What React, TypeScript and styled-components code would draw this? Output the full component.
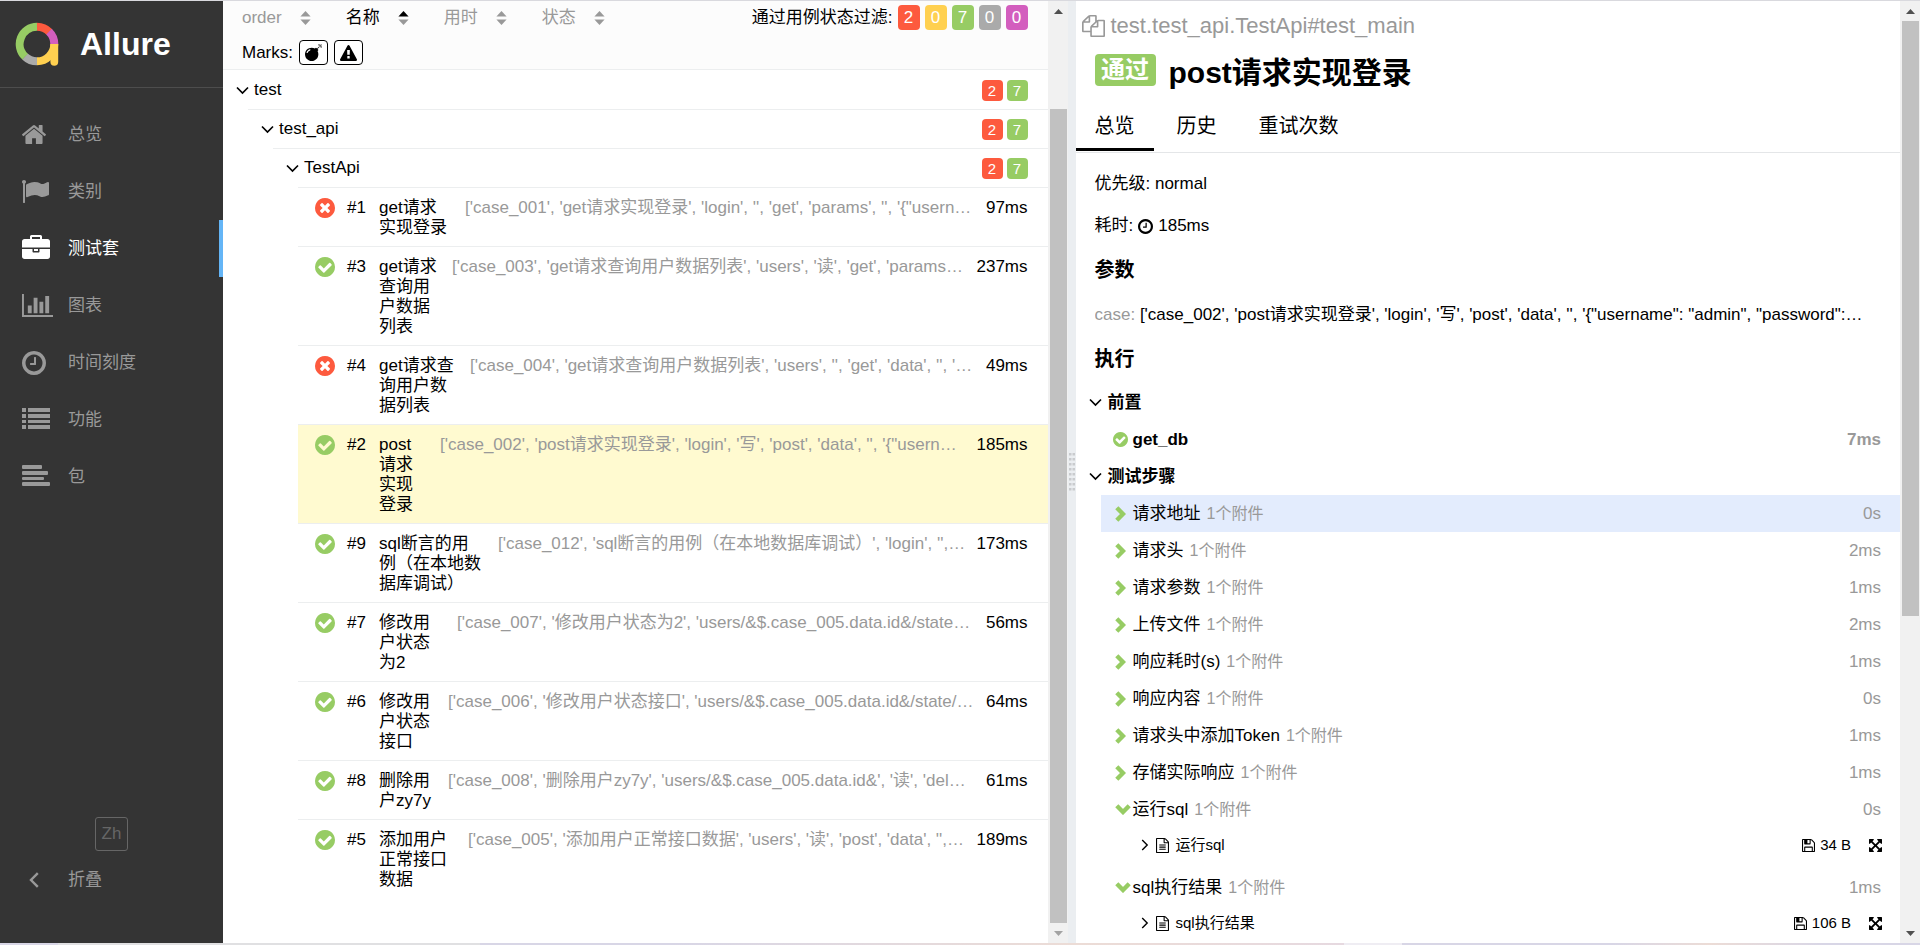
import React from "react";
import styled, { createGlobalStyle, css } from "styled-components";

const GlobalStyle = createGlobalStyle`
  *, *::before, *::after { box-sizing: border-box; }
  body {
    margin: 0;
    font: 17px/20px "Liberation Sans", "Noto Sans CJK SC", sans-serif;
    color: #000;
    background: #fff;
  }
  button {
    font: inherit;
    color: inherit;
    background: none;
    border: 0;
    padding: 0;
    cursor: pointer;
  }
  ul { list-style: none; margin: 0; padding: 0; }
  h1, h2, h3, p { margin: 0; }
  a { color: inherit; text-decoration: none; }
  svg { display: block; flex: none; }
`;

const color = {
  failed: "#fd5a3e",
  broken: "#ffd050",
  passed: "#97cc64",
  skipped: "#aaa",
  unknown: "#d35ebe",
  muted: "#999",
  line: "#eceeef",
};
type Status = "failed" | "broken" | "passed" | "skipped" | "unknown";

/* ---------- icons ---------- */

const DISC =
  "q0 209-103 385.5t-279.5 279.5-385.5 103-385.5-103-279.5-279.5-103-385.5 103-385.5 279.5-279.5 385.5-103 385.5 103 279.5 279.5 103 385.5z";

const icons = {
  home: {
    box: "89 253 1614 1283",
    d: "M1472 992v480q0 26-19 45t-45 19h-384v-384h-256v384h-384q-26 0-45-19t-19-45v-480q0-1 .5-3t.5-3l575-474 575 474q1 2 1 6zm223-69l-62 74q-8 9-21 11h-3q-13 0-21-7l-692-577-692 577q-12 8-24 7-13-2-21-11l-62-74q-8-10-7-23.5t11-21.5l719-599q32-26 76-26t76 26l244 204v-195q0-14 9-23t23-9h192q14 0 23 9t9 23v408l219 182q10 8 11 21.5t-7 23.5z",
  },
  flag: {
    box: "64 128 1728 1536",
    d: "M320 256q0 72-64 110v1266q0 13-9.5 22.5t-22.5 9.5h-64q-13 0-22.5-9.5t-9.5-22.5v-1266q-64-38-64-110 0-53 37.5-90.5t90.5-37.5 90.5 37.5 37.5 90.5zm1472 64v763q0 25-12.5 38.5t-39.5 27.5q-215 116-369 116-61 0-123.5-22t-108.5-48-115.5-48-142.5-22q-192 0-464 146-17 9-33 9-26 0-45-19t-19-45v-742q0-32 31-55 21-14 79-43 236-120 421-120 107 0 200 29t219 88q38 19 88 19 54 0 117.5-21t110-47 88-47 54.5-21q26 0 45 19t19 45z",
  },
  briefcase: {
    box: "0 0 1792 1792",
    d: "M640 256h512v-128h-512v128zm1152 640v480q0 66-47 113t-113 47h-1472q-66 0-113-47t-47-113v-480h672v160q0 26 19 45t45 19h320q26 0 45-19t19-45v-160h672zm-768 0v128h-256v-128h256zm768-480v384h-1792v-384q0-66 47-113t113-47h352v-160q0-40 28-68t68-28h576q40 0 68 28t28 68v160h352q66 0 113 47t47 113z",
  },
  chart: {
    box: "0 128 2048 1536",
    d: "M640 896v512h-256v-512h256zm384-512v1024h-256v-1024h256zm1024 1152v128h-2048v-1536h128v1408h1920zm-640-896v768h-256v-768h256zm384-384v1152h-256v-1152h256z",
  },
  clock: {
    box: "128 128 1536 1536",
    d:
      "M1024 544v448q0 14-9 23t-23 9h-320q-14 0-23-9t-9-23v-64q0-14 9-23t23-9h224v-352q0-14 9-23t23-9h64q14 0 23 9t9 23zm416 352q0-148-73-273t-198-198-273-73-273 73-198 198-73 273 73 273 198 198 273 73 273-73 198-198 73-273zm224 0" +
      DISC,
  },
  list: {
    box: "0 0 28 24",
    d: "M0 0h4v4H0zM6 0h22v4H6zM0 6h4v4H0zM6 6h22v4H6zM0 12h4v3H0zM6 12h22v3H6zM0 17h4v4H0zM6 17h22v4H6z",
  },
  align: {
    box: "0 0 28 24",
    d: "M1 0h18q1 0 1 1v2q0 1-1 1H1q-1 0-1-1V1q0-1 1-1zM1 6h24q1 0 1 1v2q0 1-1 1H1q-1 0-1-1V7q0-1 1-1zM1 12h20q1 0 1 1v1q0 1-1 1H1q-1 0-1-1v-1q0-1 1-1zM1 17h26q1 0 1 1v2q0 1-1 1H1q-1 0-1-1v-2q0-1 1-1z",
  },
  passed: {
    box: "128 128 1536 1536",
    d:
      "M1412 734q0-28-18-46l-91-90q-19-19-45-19t-45 19l-408 407-226-226q-19-19-45-19t-45 19l-91 90q-18 18-18 46 0 27 18 45l362 362q19 19 45 19 27 0 46-19l543-543q18-18 18-45zm252 162" +
      DISC,
  },
  failed: {
    box: "128 128 1536 1536",
    d:
      "M1277 1122q0-26-19-45l-181-181 181-181q19-19 19-45 0-27-19-46l-90-90q-19-18-46-18-26 0-45 18l-181 181-181-181q-19-18-45-18-27 0-46 18l-90 90q-19 19-19 46 0 26 19 45l181 181-181 181q-19 19-19 45 0 27 19 46l90 90q19 18 46 18 26 0 45-18l181-181 181 181q19 18 45 18 27 0 46-18l90-90q19-19 19-46zm387-226" +
      DISC,
  },
  bomb: {
    box: "0 0 1792 1792",
    d: "M571 589q-10-25-34-35t-49 0q-108 44-191 127t-127 191q-10 25 0 49t35 34q13 5 24 5 42 0 60-40 34-84 98.5-148.5t148.5-98.5q25-11 35-35t0-49zm942-356l46 46-244 243 68 68q19 19 19 45.5t-19 45.5l-64 64q89 161 89 343 0 143-55.5 273.5t-150 225-225 150-273.5 55.5-273.5-55.5-225-150-150-225-55.5-273.5 55.5-273.5 150-225 225-150 273.5-55.5q182 0 343 89l64-64q19-19 45.5-19t45.5 19l68 68zm8-56q-10 10-22 10-13 0-23-10l-91-90q-9-10-9-23t9-23q10-9 23-9t23 9l90 91q10 9 10 22.5t-10 22.5zm230 230q-11 9-23 9t-23-9l-90-91q-10-9-10-22.5t10-22.5q9-10 22.5-10t22.5 10l91 90q9 10 9 23t-9 23zm41-183q0 14-9 23t-23 9h-96q-14 0-23-9t-9-23 9-23 23-9h96q14 0 23 9t9 23zm-192-192v96q0 14-9 23t-23 9-23-9-9-23v-96q0-14 9-23t23-9 23 9 9 23zm151 55l-91 90q-10 10-22 10-13 0-23-10-10-9-10-22.5t10-22.5l90-91q10-9 23-9t23 9q9 10 9 23t-9 23z",
  },
  warning: {
    box: "0 0 1792 1664",
    d: "M1024 1375v-190q0-14-9.5-23.5t-22.5-9.5h-192q-13 0-22.5 9.5t-9.5 23.5v190q0 14 9.5 23.5t22.5 9.5h192q13 0 22.5-9.5t9.5-23.5zm-2-374l18-459q0-12-10-19-13-11-24-11h-220q-11 0-24 11-10 7-10 21l17 457q0 10 10 16.5t24 6.5h185q14 0 23.5-6.5t10.5-16.5zm-14-934l768 1408q35 63-2 126-17 29-46.5 46t-63.5 17h-1536q-34 0-63.5-17t-46.5-46q-37-63-2-126l768-1408q17-31 47-49t65-18 65 18 47 49z",
  },
  copy: {
    box: "0 0 1792 1792",
    d: "M1696 384q40 0 68 28t28 68v1216q0 40-28 68t-68 28h-960q-40 0-68-28t-28-68v-288h-544q-40 0-68-28t-28-68v-672q0-40 20-88t48-76l408-408q28-28 76-48t88-20h416q40 0 68 28t28 68v328q68-40 128-40h416zm-544 213l-299 299h299v-299zm-640-384l-299 299h299v-299zm196 647l316-316v-416h-384v416q0 40-28 68t-68 28h-416v640h512v-256q0-40 20-88t48-76zm956 804v-1152h-384v416q0 40-28 68t-68 28h-416v640h896z",
  },
  file: {
    box: "128 0 1536 1792",
    d: "M1596 380q28 28 48 76t20 88v1152q0 40-28 68t-68 28h-1344q-40 0-68-28t-28-68v-1600q0-40 28-68t68-28h896q40 0 88 20t76 48zm-444-244v376h376q-10-29-22-41l-313-313q-12-12-41-22zm384 1528v-1024h-416q-40 0-68-28t-28-68v-416h-768v1536h1280zm-1024-864q0-14 9-23t23-9h704q14 0 23 9t9 23v64q0 14-9 23t-23 9h-704q-14 0-23-9t-9-23v-64zm736 224q14 0 23 9t9 23v64q0 14-9 23t-23 9h-704q-14 0-23-9t-9-23v-64q0-14 9-23t23-9h704zm0 256q14 0 23 9t9 23v64q0 14-9 23t-23 9h-704q-14 0-23-9t-9-23v-64q0-14 9-23t23-9h704z",
  },
  save: {
    box: "128 128 1536 1536",
    d: "M512 1536h768v-384h-768v384zm896 0h128v-896q0-14-10-38.5t-20-34.5l-281-281q-10-10-34-20t-39-10v416q0 40-28 68t-68 28h-576q-40 0-68-28t-28-68v-416h-128v1280h128v-416q0-40 28-68t68-28h832q40 0 68 28t28 68v416zm-384-928v-320q0-13-9.5-22.5t-22.5-9.5h-192q-13 0-22.5 9.5t-9.5 22.5v320q0 13 9.5 22.5t22.5 9.5h192q13 0 22.5-9.5t9.5-22.5zm640 32v928q0 40-28 68t-68 28h-1344q-40 0-68-28t-28-68v-1344q0-40 28-68t68-28h928q40 0 88 20t76 48l280 280q28 28 48 76t20 88z",
  },
  expand: {
    box: "128 128 1536 1536",
    d: "M1411 541l-355 355 355 355 144-144q29-31 70-14 39 17 39 59v448q0 26-19 45t-45 19h-448q-42 0-59-40-17-39 14-69l144-144-355-355-355 355 144 144q31 30 14 69-17 40-59 40h-448q-26 0-45-19t-19-45v-448q0-42 40-59 39-17 69 14l144 144 355-355-355-355-144 144q-19 19-45 19-12 0-24-5-40-17-40-59v-448q0-26 19-45t45-19h448q42 0 59 40 17 39-14 69l-144 144 355 355 355-355-144-144q-31-30-14-69 17-40 59-40h448q26 0 45 19t19 45v448q0 42-39 59-13 5-25 5-26 0-45-19z",
  },
};
type IconName = keyof typeof icons;

const Icon = ({ name, w, h = w, fill = "currentColor" }: { name: IconName; w: number; h?: number; fill?: string }) => (
  <svg width={w} height={h} viewBox={icons[name].box} fill={fill} preserveAspectRatio="none" aria-hidden="true">
    <path d={icons[name].d} />
  </svg>
);

const arrows = {
  down: { w: 13, h: 9, pts: "1,1.5 6.5,7 12,1.5", sw: 1.7, c: "#000" },
  right: { w: 8, h: 12, pts: "1.2,1 6.2,6 1.2,11", sw: 1.4, c: "#000" },
  left: { w: 10, h: 16, pts: "8.8,1.2 2,8 8.8,14.8", sw: 2.4, c: "#999" },
  stepRight: { w: 11, h: 16, pts: "1.8,1.8 8,8 1.8,14.2", sw: 4.4, c: color.passed },
  stepDown: { w: 16, h: 11, pts: "1.8,1.8 8,8 14.2,1.8", sw: 4.4, c: color.passed },
};
const Arrow = ({ kind }: { kind: keyof typeof arrows }) => {
  const a = arrows[kind];
  return (
    <svg width={a.w} height={a.h} viewBox={`0 0 ${a.w} ${a.h}`} fill="none" aria-hidden="true">
      <polyline points={a.pts} stroke={a.c} strokeWidth={a.sw} />
    </svg>
  );
};

const SortArrows = ({ up }: { up?: boolean }) => (
  <svg width="11" height="14" viewBox="0 0 11 14" aria-hidden="true">
    <path d="M5.5 0L10.6 5.6H.4z" fill={up ? "#000" : "#999"} />
    <path d="M5.5 14L.4 8.4h10.2z" fill="#999" />
  </svg>
);

const Logo = () => (
  <svg width="44" height="44" viewBox="0 0 44 44" fill="none" strokeWidth="8" aria-hidden="true">
    <path d="M22 4.8A17.2 17.2 0 0 1 34.4 10.1" stroke={color.failed} />
    <path d="M34 9.7A17.4 17.4 0 0 1 39.3 22" stroke={color.unknown} />
    <path d="M39.3 22A17.4 17.4 0 0 1 22 39.3" stroke={color.broken} />
    <path d="M35.4 22h7.8v17.8a3.9 3.9 0 0 1-7.8 0z" fill={color.broken} />
    <path d="M22 39.3A17.4 17.4 0 0 1 9.9 34.5" stroke={color.skipped} />
    <path d="M10.1 34.7A17.4 17.4 0 0 1 22 4.7" stroke={color.passed} />
  </svg>
);

/* ---------- frame ---------- */

const Page = styled.div`
  display: flex;
  flex-direction: column;
  height: 100vh;
  overflow: hidden;
  border-top: 1px solid #d9d9de;
`;
const Columns = styled.div`
  display: flex;
  flex: 1;
  min-height: 0;
`;
const BottomEdge = styled.div`
  flex: none;
  height: 2px;
  background: linear-gradient(
    to right,
    #d8d6e6 0 3%, #e0e0e2 3% 25%, #d8d6e6 25% 35%, #ecdcd6 56%, #e6d9e0 70%,
    #efedf3 70% 73%, #d8d6e6 73% 84%, #ecdcd6 89%, #d8d6e6 95%
  );
`;

/* ---------- side navigation ---------- */

const Side = styled.aside`
  display: flex;
  flex-direction: column;
  flex: none;
  width: 223px;
  background: #343434;
  color: #999;
`;
const Brand = styled.a`
  display: flex;
  align-items: center;
  gap: 21px;
  height: 87px;
  padding-left: 15px;
  border-bottom: 1px solid #4d4d4d;
  color: #fff;
  font-size: 32px;
  font-weight: bold;
`;
const NavList = styled.ul`
  flex: 1;
  padding-top: 18px;
`;
const navRow = css`
  display: flex;
  align-items: center;
  width: 100%;
  height: 57px;
`;
const NavLink = styled.a<{ $active?: boolean }>`
  ${navRow}
  padding-left: 22px;
  border-right: 4px solid ${(p) => (p.$active ? "#64b5f6" : "transparent")};
  color: ${(p) => (p.$active ? "#fff" : "#999")};
`;
const NavIcon = styled.span`
  width: 46px;
`;
const LangButton = styled.button`
  align-self: center;
  width: 33px;
  height: 34px;
  border: 1px solid #666;
  border-radius: 3px;
  color: #666;
`;
const CollapseButton = styled.button`
  ${navRow}
  margin-bottom: 35px;
  padding-left: 29px;
`;
const CollapseIcon = styled.span`
  width: 39px;
`;

/* ---------- scroll bars and splitter ---------- */

const Bar = styled.div`
  display: flex;
  flex-direction: column;
  flex: none;
  width: 20px;
  padding: 0 1px 0 2px;
  background: #f1f1f1;
`;
const BarEnd = styled.span`
  display: flex;
  align-items: center;
  justify-content: center;
  height: 20px;
`;
const BarGap = styled.span<{ $grow: number }>`
  flex: ${(p) => p.$grow} 0 0;
`;
const BarThumb = styled(BarGap)`
  background: #c1c1c1;
`;
const ScrollBar = ({ before, size, after, dim }: { before: number; size: number; after: number; dim?: boolean }) => (
  <Bar aria-hidden="true">
    <BarEnd>
      <svg width="9" height="5"><path d="M4.500 0L9 5H0z" fill="#505050" /></svg>
    </BarEnd>
    <BarGap $grow={before} />
    <BarThumb $grow={size} />
    <BarGap $grow={after} />
    <BarEnd>
      <svg width="9" height="5"><path d="M0 0h9L4.500 5z" fill={dim ? "#a3a3a3" : "#505050"} /></svg>
    </BarEnd>
  </Bar>
);
const Gutter = styled.div`
  display: flex;
  align-items: center;
  justify-content: center;
  flex: none;
  width: 8px;
  background: #ebeef1;
`;
const Grip = () => (
  <svg width="6" height="38" fill="#c9cbce" aria-hidden="true">
    {Array.from({ length: 8 }, (_, i) => (
      <path key={i} d={`M0 ${i * 5}h2.500v2.500H0zM3.500 ${i * 5}H6v2.500H3.500z`} />
    ))}
  </svg>
);

/* ---------- tree pane ---------- */

const Pane = styled.section`
  display: flex;
  flex: 1 1 0;
  min-width: 0;
`;
const PaneBody = styled.div`
  flex: 1;
  min-width: 0;
  overflow: hidden;
`;
const TreeHead = styled.header`
  height: 69px;
  padding: 4px 20px 0 19px;
  background: #fcfcfc;
  border-bottom: 1px solid ${color.line};
`;
const HeadRow = styled.div`
  display: flex;
  align-items: center;
  height: 25px;
  margin-bottom: 10px;
`;
const Sorter = styled.button<{ $active?: boolean }>`
  display: flex;
  align-items: center;
  gap: 18px;
  margin-right: 35px;
  color: ${(p) => (p.$active ? "#000" : "#999")};
`;
const Filters = styled.div`
  display: flex;
  align-items: center;
  gap: 5px;
  margin-left: auto;
`;
const FilterBadge = styled.button<{ $status: Status }>`
  width: 22px;
  height: 25px;
  border-radius: 4px;
  background: ${(p) => color[p.$status]};
  color: #fff;
`;
const MarkButton = styled.button`
  display: flex;
  align-items: center;
  justify-content: center;
  width: 29px;
  height: 25px;
  margin-left: 6px;
  border: 1px solid #000;
  border-radius: 4px;
  background: #fff;
`;
const Tree = styled.ul`
  padding-top: 1px;
`;
const Branch = styled.ul`
  margin-left: 25px;
  & > li { border-top: 1px solid ${color.line}; }
`;
const GroupRow = styled.button`
  display: flex;
  align-items: center;
  gap: 5px;
  width: 100%;
  height: 38px;
  padding: 0 20px 0 13px;
`;
const Counts = styled.span`
  display: flex;
  gap: 4px;
  margin-left: auto;
`;
const Count = styled.span<{ $status: Status }>`
  width: 21px;
  border-radius: 4px;
  background: ${(p) => color[p.$status]};
  color: #fff;
  font-size: 15px;
  line-height: 21px;
  text-align: center;
`;
const CaseRow = styled.a<{ $selected?: boolean }>`
  display: flex;
  align-items: flex-start;
  padding: 10px 20px 8px 17px;
  background: ${(p) => (p.$selected ? "#fffad0" : "none")};
`;
const CaseOrder = styled.span`
  flex: none;
  width: 32px;
  margin-left: 12px;
`;
const CaseName = styled.span<{ $width: number }>`
  flex: none;
  width: ${(p) => p.$width}px;
  margin-right: 15px;
`;
const CaseParams = styled.span`
  flex: 1;
  min-width: 0;
  overflow: hidden;
  color: #999;
  text-overflow: ellipsis;
  white-space: nowrap;
`;

/* ---------- details pane ---------- */

const FullName = styled.div`
  display: flex;
  align-items: center;
  gap: 6px;
  height: 30px;
  margin: 10px 0 13px 6px;
  color: #999;
  font-size: 22px;
`;
const Title = styled.h1`
  display: flex;
  align-items: flex-start;
  gap: 13px;
  padding-left: 19px;
  font-size: 30px;
  line-height: 38px;
`;
const TitleStatus = styled.span`
  width: 61px;
  border-radius: 4px;
  background: ${color.passed};
  color: #fff;
  font-size: 24px;
  line-height: 32px;
  text-align: center;
`;
const Tabs = styled.div`
  display: flex;
  gap: 4px;
  margin-top: 9px;
  padding-bottom: 1px;
  border-bottom: 1px solid #e4e6e8;
`;
const Tab = styled.button<{ $active?: boolean }>`
  height: 50px;
  padding: 3px 19px 0;
  border-bottom: 3px solid ${(p) => (p.$active ? "#000" : "transparent")};
  font-size: 20px;
`;
const Info = styled.div`
  display: flex;
  flex-direction: column;
  gap: 22px;
  padding: 21px 19px 12px;
`;
const Line = styled.p`
  display: flex;
  align-items: center;
  gap: 5px;
`;
const ParamLine = styled.p`
  overflow: hidden;
  text-overflow: ellipsis;
  white-space: nowrap;
`;
const Muted = styled.span`
  color: #999;
`;
const Subtitle = styled.h2`
  font-size: 20px;
  line-height: 25px;
`;
const SectionRow = styled.button`
  display: flex;
  align-items: center;
  gap: 6px;
  width: 100%;
  height: 37px;
  padding-left: 13px;
  font-weight: bold;
`;
const Steps = styled.ul`
  margin-left: 25px;
`;
const StepRow = styled.button<{ $hover?: boolean; $bold?: boolean }>`
  display: flex;
  align-items: center;
  width: 100%;
  height: 37px;
  padding: 0 19px 0 12px;
  background: ${(p) => (p.$hover ? "#e3ecfd" : "none")};
  font-weight: ${(p) => (p.$bold ? "bold" : "normal")};
`;
const StepIcon = styled.span<{ $indent?: boolean }>`
  flex: none;
  width: 20px;
  padding-left: ${(p) => (p.$indent ? "2px" : "0")};
`;
const StepExtra = styled.span`
  margin-left: 6px;
  color: #999;
  font-size: 16px;
`;
const StepTime = styled.span`
  margin-left: auto;
  color: #999;
`;
const Attachment = styled.div`
  display: flex;
  align-items: center;
  height: 32px;
  margin-bottom: 9px;
  padding: 2px 18px 0 40px;
  font-size: 15px;
`;
const AttachmentToggle = styled.button`
  display: flex;
  align-items: center;
  gap: 7px;
`;
const AttachmentSize = styled.a`
  display: flex;
  align-items: center;
  gap: 5px;
  margin: 0 18px 0 auto;
`;

/* ---------- data ---------- */

const nav: { icon: IconName; w: number; h: number; label: string; active?: boolean }[] = [
  { icon: "home", w: 24, h: 19, label: "总览" },
  { icon: "flag", w: 27, h: 23, label: "类别" },
  { icon: "briefcase", w: 28, h: 28, label: "测试套", active: true },
  { icon: "chart", w: 31, h: 23, label: "图表" },
  { icon: "clock", w: 24, h: 24, label: "时间刻度" },
  { icon: "list", w: 28, h: 24, label: "功能" },
  { icon: "align", w: 28, h: 24, label: "包" },
];

const filters: [Status, number][] = [
  ["failed", 2],
  ["broken", 0],
  ["passed", 7],
  ["skipped", 0],
  ["unknown", 0],
];

const cases: { n: number; ok: boolean; name: string; width: number; params: string; time: string }[] = [
  { n: 1, ok: false, name: "get请求实现登录", width: 71, time: "97ms", params: `['case_001', 'get请求实现登录', 'login', '', 'get', 'params', '', '{"usern…` },
  { n: 3, ok: true, name: "get请求查询用户数据列表", width: 58, time: "237ms", params: `['case_003', 'get请求查询用户数据列表', 'users', '读', 'get', 'params…` },
  { n: 4, ok: false, name: "get请求查询用户数据列表", width: 76, time: "49ms", params: `['case_004', 'get请求查询用户数据列表', 'users', '', 'get', 'data', '', '…` },
  { n: 2, ok: true, name: "post请求实现登录", width: 46, time: "185ms", params: `['case_002', 'post请求实现登录', 'login', '写', 'post', 'data', '', '{"usern…` },
  { n: 9, ok: true, name: "sql断言的用例（在本地数据库调试）", width: 104, time: "173ms", params: `['case_012', 'sql断言的用例（在本地数据库调试）', 'login', '',…` },
  { n: 7, ok: true, name: "修改用户状态为2", width: 63, time: "56ms", params: `['case_007', '修改用户状态为2', 'users/&$.case_005.data.id&/state…` },
  { n: 6, ok: true, name: "修改用户状态接口", width: 54, time: "64ms", params: `['case_006', '修改用户状态接口', 'users/&$.case_005.data.id&/state/…` },
  { n: 8, ok: true, name: "删除用户zy7y", width: 54, time: "61ms", params: `['case_008', '删除用户zy7y', 'users/&$.case_005.data.id&', '读', 'del…` },
  { n: 5, ok: true, name: "添加用户正常接口数据", width: 74, time: "189ms", params: `['case_005', '添加用户正常接口数据', 'users', '读', 'post', 'data', '',…` },
];

const steps: { name: string; time: string; hover?: boolean; file?: string }[] = [
  { name: "请求地址", time: "0s", hover: true },
  { name: "请求头", time: "2ms" },
  { name: "请求参数", time: "1ms" },
  { name: "上传文件", time: "2ms" },
  { name: "响应耗时(s)", time: "1ms" },
  { name: "响应内容", time: "0s" },
  { name: "请求头中添加Token", time: "1ms" },
  { name: "存储实际响应", time: "1ms" },
  { name: "运行sql", time: "0s", file: "34 B" },
  { name: "sql执行结果", time: "1ms", file: "106 B" },
];

/* ---------- page ---------- */

const Group = ({ name, children }: { name: string; children: React.ReactNode }) => (
  <li>
    <GroupRow type="button">
      <Arrow kind="down" />
      {name}
      <Counts>
        <Count $status="failed">2</Count>
        <Count $status="passed">7</Count>
      </Counts>
    </GroupRow>
    <Branch>{children}</Branch>
  </li>
);

export default function App() {
  return (
    <Page>
      <GlobalStyle />
      <Columns>
        <Side>
          <Brand href="#">
            <Logo />
            Allure
          </Brand>
          <NavList>
            {nav.map((item) => (
              <li key={item.label}>
                <NavLink href="#" $active={item.active}>
                  <NavIcon>
                    <Icon name={item.icon} w={item.w} h={item.h} />
                  </NavIcon>
                  {item.label}
                </NavLink>
              </li>
            ))}
          </NavList>
          <LangButton type="button">Zh</LangButton>
          <CollapseButton type="button">
            <CollapseIcon>
              <Arrow kind="left" />
            </CollapseIcon>
            折叠
          </CollapseButton>
        </Side>

        <Pane>
          <PaneBody>
            <TreeHead>
              <HeadRow>
                <Sorter type="button">order<SortArrows /></Sorter>
                <Sorter type="button" $active>名称<SortArrows up /></Sorter>
                <Sorter type="button">用时<SortArrows /></Sorter>
                <Sorter type="button">状态<SortArrows /></Sorter>
                <Filters>
                  <span>通过用例状态过滤:</span>
                  {filters.map(([status, count]) => (
                    <FilterBadge key={status} type="button" $status={status}>{count}</FilterBadge>
                  ))}
                </Filters>
              </HeadRow>
              <HeadRow>
                Marks:
                <MarkButton type="button" aria-label="flaky"><Icon name="bomb" w={17} /></MarkButton>
                <MarkButton type="button" aria-label="new failed"><Icon name="warning" w={17} h={16} /></MarkButton>
              </HeadRow>
            </TreeHead>
            <Tree>
              <Group name="test">
                <Group name="test_api">
                  <Group name="TestApi">
                    {cases.map((c) => (
                      <li key={c.n}>
                        <CaseRow href="#" $selected={c.n === 2}>
                          <Icon name={c.ok ? "passed" : "failed"} w={20} fill={c.ok ? color.passed : color.failed} />
                          <CaseOrder>#{c.n}</CaseOrder>
                          <CaseName $width={c.width}>{c.name}</CaseName>
                          <CaseParams>{c.params}</CaseParams>
                          <span>{c.time}</span>
                        </CaseRow>
                      </li>
                    ))}
                  </Group>
                </Group>
              </Group>
            </Tree>
          </PaneBody>
          <ScrollBar before={88} size={816} after={0} dim />
        </Pane>

        <Gutter>
          <Grip />
        </Gutter>

        <Pane>
          <PaneBody>
            <FullName>
              <Icon name="copy" w={23} h={22} />
              test.test_api.TestApi#test_main
            </FullName>
            <Title>
              <TitleStatus>通过</TitleStatus>
              post请求实现登录
            </Title>
            <Tabs role="tablist">
              <Tab type="button" role="tab" aria-selected="true" $active>总览</Tab>
              <Tab type="button" role="tab" aria-selected="false">历史</Tab>
              <Tab type="button" role="tab" aria-selected="false">重试次数</Tab>
            </Tabs>
            <Info>
              <Line>优先级: normal</Line>
              <Line>耗时: <Icon name="clock" w={15} /> 185ms</Line>
              <Subtitle>参数</Subtitle>
              <ParamLine>
                <Muted>case:</Muted>{" "}
                {`['case_002', 'post请求实现登录', 'login', '写', 'post', 'data', '', '{"username": "admin", "password":…`}
              </ParamLine>
              <Subtitle>执行</Subtitle>
            </Info>
            <SectionRow type="button"><Arrow kind="down" />前置</SectionRow>
            <Steps>
              <li>
                <StepRow type="button" $bold>
                  <StepIcon><Icon name="passed" w={15} fill={color.passed} /></StepIcon>
                  get_db
                  <StepTime>7ms</StepTime>
                </StepRow>
              </li>
            </Steps>
            <SectionRow type="button"><Arrow kind="down" />测试步骤</SectionRow>
            <Steps>
              {steps.map((s) => (
                <li key={s.name}>
                  <StepRow type="button" $hover={s.hover}>
                    <StepIcon $indent><Arrow kind={s.file ? "stepDown" : "stepRight"} /></StepIcon>
                    {s.name}
                    <StepExtra>1个附件</StepExtra>
                    <StepTime>{s.time}</StepTime>
                  </StepRow>
                  {s.file && (
                    <Attachment>
                      <AttachmentToggle type="button">
                        <Arrow kind="right" />
                        <Icon name="file" w={13} h={15} />
                        {s.name}
                      </AttachmentToggle>
                      <AttachmentSize href="#">
                        <Icon name="save" w={13} />
                        {s.file}
                      </AttachmentSize>
                      <button type="button" aria-label="fullscreen"><Icon name="expand" w={13} /></button>
                    </Attachment>
                  )}
                </li>
              ))}
            </Steps>
          </PaneBody>
          <ScrollBar before={0} size={596} after={307} />
        </Pane>
      </Columns>
      <BottomEdge />
    </Page>
  );
}
